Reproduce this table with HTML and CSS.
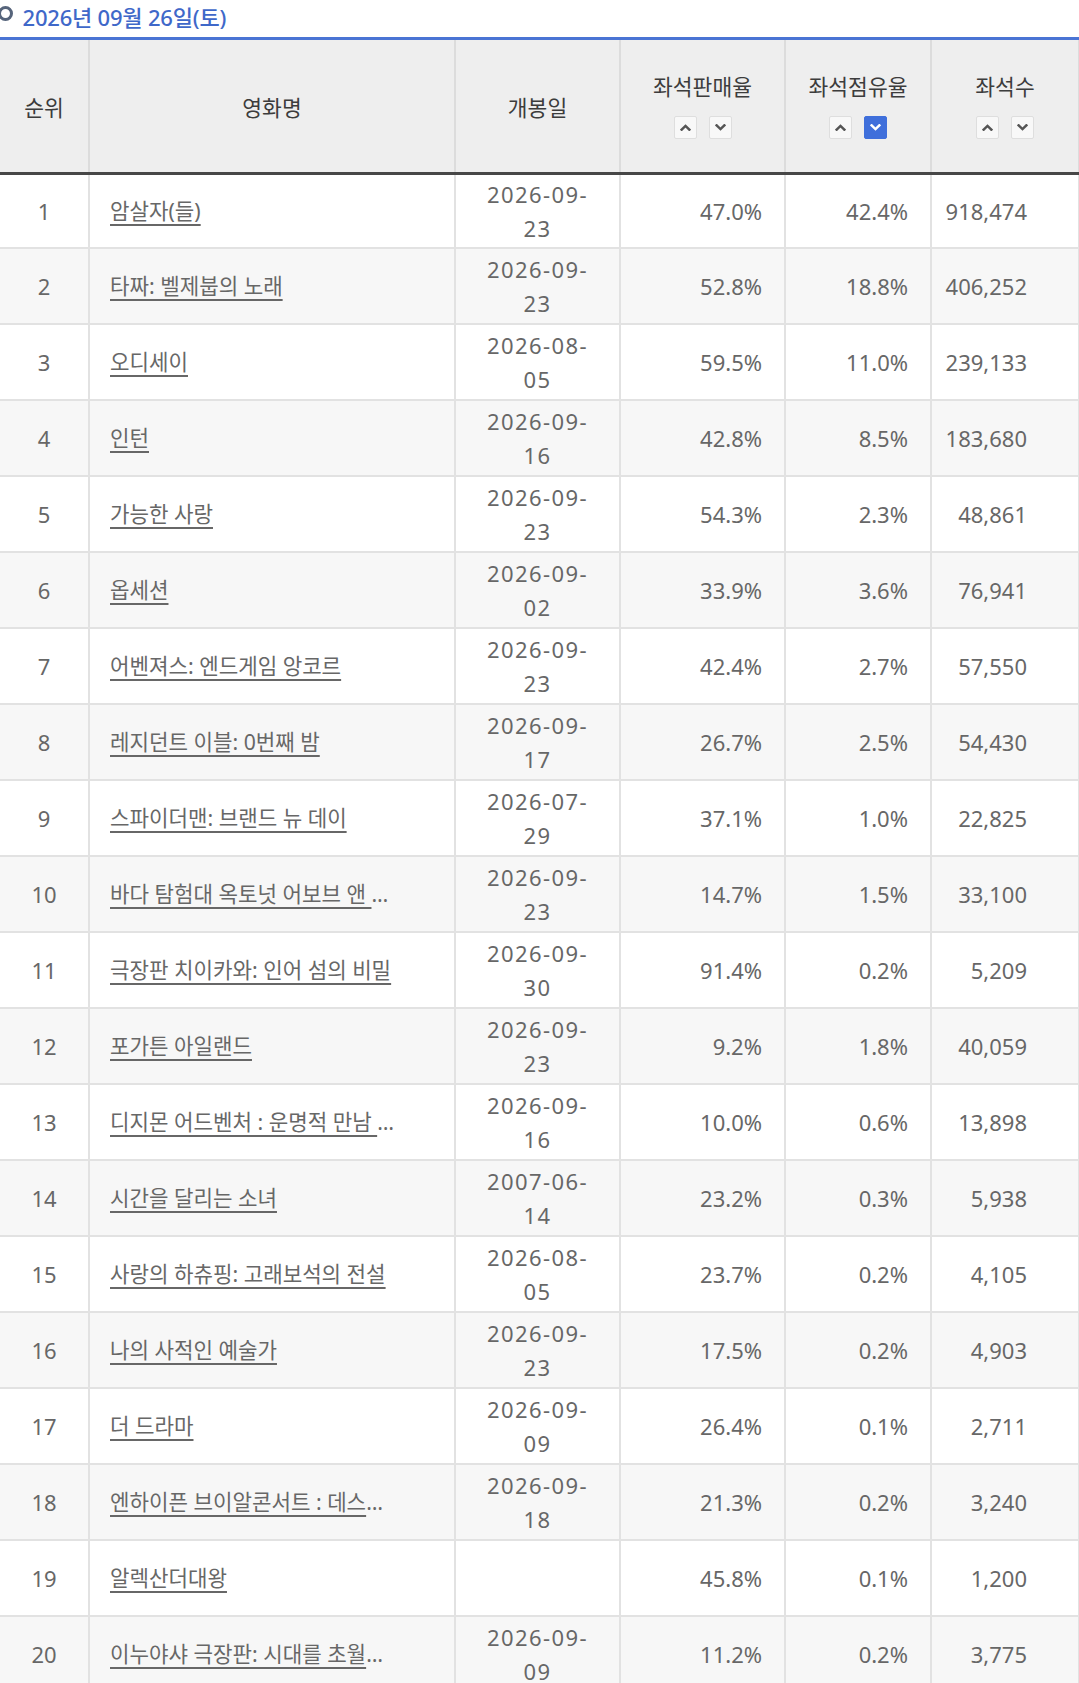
FILE: index.html
```html
<!DOCTYPE html>
<html lang="ko">
<head>
<meta charset="utf-8">
<title>좌석판매율</title>
<link rel="stylesheet" href="styles.css">
</head>
<body>
<div class="page">
  <h2 class="title"><span class="bullet"></span>2026년 09월 26일(토)</h2>
  <table class="rank">
    <colgroup>
      <col class="w-rank"><col class="w-name"><col class="w-date"><col class="w-sale"><col class="w-share"><col class="w-seat">
    </colgroup>
    <thead>
      <tr>
        <th class="first">순위</th>
        <th>영화명</th>
        <th>개봉일</th>
        <th>
          <div class="hlabel">좌석판매율</div>
          <div class="sort">
            <span class="sbtn"><svg viewBox="0 0 10 6"><path d="M1.5 5 L5 1.6 L8.5 5"/></svg></span>
            <span class="sbtn"><svg viewBox="0 0 10 6"><path d="M1.5 1 L5 4.4 L8.5 1"/></svg></span>
          </div>
        </th>
        <th>
          <div class="hlabel">좌석점유율</div>
          <div class="sort">
            <span class="sbtn"><svg viewBox="0 0 10 6"><path d="M1.5 5 L5 1.6 L8.5 5"/></svg></span>
            <span class="sbtn on"><svg viewBox="0 0 10 6"><path d="M1.5 1 L5 4.4 L8.5 1"/></svg></span>
          </div>
        </th>
        <th>
          <div class="hlabel">좌석수</div>
          <div class="sort">
            <span class="sbtn"><svg viewBox="0 0 10 6"><path d="M1.5 5 L5 1.6 L8.5 5"/></svg></span>
            <span class="sbtn"><svg viewBox="0 0 10 6"><path d="M1.5 1 L5 4.4 L8.5 1"/></svg></span>
          </div>
        </th>
      </tr>
    </thead>
    <tbody>
      <tr><td class="first num-c">1</td><td class="name"><div class="nm"><a href="#">암살자(들)</a></div></td><td class="date">2026-09-<br>23</td><td class="num">47.0%</td><td class="num">42.4%</td><td class="num last">918,474</td></tr>
      <tr><td class="first num-c">2</td><td class="name"><div class="nm"><a href="#">타짜: 벨제붑의 노래</a></div></td><td class="date">2026-09-<br>23</td><td class="num">52.8%</td><td class="num">18.8%</td><td class="num last">406,252</td></tr>
      <tr><td class="first num-c">3</td><td class="name"><div class="nm"><a href="#">오디세이</a></div></td><td class="date">2026-08-<br>05</td><td class="num">59.5%</td><td class="num">11.0%</td><td class="num last">239,133</td></tr>
      <tr><td class="first num-c">4</td><td class="name"><div class="nm"><a href="#">인턴</a></div></td><td class="date">2026-09-<br>16</td><td class="num">42.8%</td><td class="num">8.5%</td><td class="num last">183,680</td></tr>
      <tr><td class="first num-c">5</td><td class="name"><div class="nm"><a href="#">가능한 사랑</a></div></td><td class="date">2026-09-<br>23</td><td class="num">54.3%</td><td class="num">2.3%</td><td class="num last">48,861</td></tr>
      <tr><td class="first num-c">6</td><td class="name"><div class="nm"><a href="#">옵세션</a></div></td><td class="date">2026-09-<br>02</td><td class="num">33.9%</td><td class="num">3.6%</td><td class="num last">76,941</td></tr>
      <tr><td class="first num-c">7</td><td class="name"><div class="nm"><a href="#">어벤져스: 엔드게임 앙코르</a></div></td><td class="date">2026-09-<br>23</td><td class="num">42.4%</td><td class="num">2.7%</td><td class="num last">57,550</td></tr>
      <tr><td class="first num-c">8</td><td class="name"><div class="nm"><a href="#">레지던트 이블: 0번째 밤</a></div></td><td class="date">2026-09-<br>17</td><td class="num">26.7%</td><td class="num">2.5%</td><td class="num last">54,430</td></tr>
      <tr><td class="first num-c">9</td><td class="name"><div class="nm"><a href="#">스파이더맨: 브랜드 뉴 데이</a></div></td><td class="date">2026-07-<br>29</td><td class="num">37.1%</td><td class="num">1.0%</td><td class="num last">22,825</td></tr>
      <tr><td class="first num-c">10</td><td class="name"><div class="nm"><a href="#">바다 탐험대 옥토넛 어보브 앤 </a><span class="ell">…</span></div></td><td class="date">2026-09-<br>23</td><td class="num">14.7%</td><td class="num">1.5%</td><td class="num last">33,100</td></tr>
      <tr><td class="first num-c">11</td><td class="name"><div class="nm"><a href="#">극장판 치이카와: 인어 섬의 비밀</a></div></td><td class="date">2026-09-<br>30</td><td class="num">91.4%</td><td class="num">0.2%</td><td class="num last">5,209</td></tr>
      <tr><td class="first num-c">12</td><td class="name"><div class="nm"><a href="#">포가튼 아일랜드</a></div></td><td class="date">2026-09-<br>23</td><td class="num">9.2%</td><td class="num">1.8%</td><td class="num last">40,059</td></tr>
      <tr><td class="first num-c">13</td><td class="name"><div class="nm"><a href="#">디지몬 어드벤처 : 운명적 만남 </a><span class="ell">…</span></div></td><td class="date">2026-09-<br>16</td><td class="num">10.0%</td><td class="num">0.6%</td><td class="num last">13,898</td></tr>
      <tr><td class="first num-c">14</td><td class="name"><div class="nm"><a href="#">시간을 달리는 소녀</a></div></td><td class="date">2007-06-<br>14</td><td class="num">23.2%</td><td class="num">0.3%</td><td class="num last">5,938</td></tr>
      <tr><td class="first num-c">15</td><td class="name"><div class="nm"><a href="#">사랑의 하츄핑: 고래보석의 전설</a></div></td><td class="date">2026-08-<br>05</td><td class="num">23.7%</td><td class="num">0.2%</td><td class="num last">4,105</td></tr>
      <tr><td class="first num-c">16</td><td class="name"><div class="nm"><a href="#">나의 사적인 예술가</a></div></td><td class="date">2026-09-<br>23</td><td class="num">17.5%</td><td class="num">0.2%</td><td class="num last">4,903</td></tr>
      <tr><td class="first num-c">17</td><td class="name"><div class="nm"><a href="#">더 드라마</a></div></td><td class="date">2026-09-<br>09</td><td class="num">26.4%</td><td class="num">0.1%</td><td class="num last">2,711</td></tr>
      <tr><td class="first num-c">18</td><td class="name"><div class="nm"><a href="#">엔하이픈 브이알콘서트 : 데스</a><span class="ell">…</span></div></td><td class="date">2026-09-<br>18</td><td class="num">21.3%</td><td class="num">0.2%</td><td class="num last">3,240</td></tr>
      <tr><td class="first num-c">19</td><td class="name"><div class="nm"><a href="#">알렉산더대왕</a></div></td><td class="date"></td><td class="num">45.8%</td><td class="num">0.1%</td><td class="num last">1,200</td></tr>
      <tr><td class="first num-c">20</td><td class="name"><div class="nm"><a href="#">이누야샤 극장판: 시대를 초월</a><span class="ell">…</span></div></td><td class="date">2026-09-<br>09</td><td class="num">11.2%</td><td class="num">0.2%</td><td class="num last">3,775</td></tr>
    </tbody>
  </table>
</div>
</body>
</html>
```

FILE: styles.css
```css
* { box-sizing: border-box; }
html, body { margin: 0; padding: 0; background: #fff; }
body {
  font-family: "Noto Sans", "Noto Sans CJK KR", sans-serif;
  color: #676767;
  width: 1079px;
  overflow: hidden;
}
.page { width: 1079px; }

.title {
  margin: 0;
  height: 37px;
  padding-bottom: 6px;
  display: flex;
  align-items: center;
  font-size: 22px;
  font-weight: 500;
  color: #3f68c9;
  letter-spacing: -0.2px;
}
.bullet {
  flex: none;
  width: 15px;
  height: 15px;
  border: 3.5px solid #56647b;
  border-radius: 50%;
  margin-left: -2px;
  margin-right: 9.5px;
  margin-bottom: 4px;
}

.rank {
  border-collapse: collapse;
  table-layout: fixed;
  width: 1079px;
  border-top: 3px solid #4a74d4;
}
.w-rank { width: 89px; }
.w-name { width: 366px; }
.w-date { width: 165px; }
.w-sale { width: 165px; }
.w-share { width: 146px; }
.w-seat { width: 148px; }

.rank th {
  background: #eeeeee;
  height: 135px;
  padding: 0;
  font-size: 21.5px;
  font-weight: 400;
  color: #3c3c3c;
  text-align: center;
  vertical-align: middle;
  border-left: 2px solid #dcdcdc;
  border-right: 2px solid #dcdcdc;
  border-bottom: 3px solid #474747;
}
.rank th.first, .rank td.first { border-left: none; }

.hlabel { line-height: 28px; }
.sort {
  display: flex;
  justify-content: center;
  gap: 12px;
  margin-top: 15px;
}
.sbtn {
  width: 23px;
  height: 23px;
  border: 1px solid #dedede;
  border-radius: 2px;
  background: #f8f8f8;
  display: flex;
  align-items: center;
  justify-content: center;
}
.sbtn svg {
  width: 11px;
  height: 7px;
  fill: none;
  stroke: #555;
  stroke-width: 2.2;
  stroke-linecap: square;
}
.sbtn.on {
  background: #3f6fdb;
  border-color: #3f6fdb;
}
.sbtn.on svg { stroke: #fff; }

.rank td {
  height: 76px;
  padding: 0;
  font-size: 22px;
  color: #676767;
  vertical-align: middle;
  border: 2px solid #e2e2e2;
  border-top: none;
  white-space: nowrap;
}
.rank tbody tr:first-child td { height: 74px; }
.rank tbody tr:nth-child(even) td { background: #f7f7f7; }

.num-c { text-align: center; }
.date { text-align: center; line-height: 34px; letter-spacing: 1.4px; }
.num { text-align: right; padding-right: 22px !important; }
.num.last { padding-right: 51px !important; }

.name { padding-left: 20px !important; }
.nm {
  width: 300px;
  white-space: nowrap;
  font-size: 21.2px;
  line-height: 30px;
}
.nm a {
  color: #676767;
  text-decoration: underline;
  text-decoration-thickness: 2px;
  text-underline-offset: 5px;
}
.ell { color: #676767; }
```
